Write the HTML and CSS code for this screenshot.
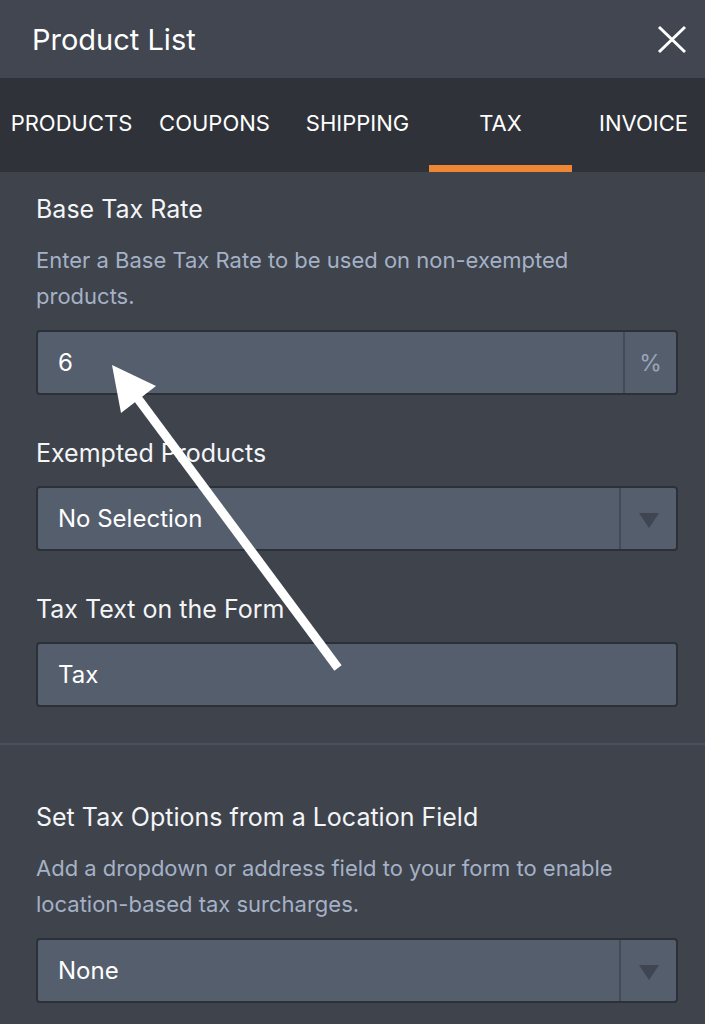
FILE: index.html
```html
<!DOCTYPE html>
<html lang="en">
<head>
<meta charset="UTF-8" />
<meta name="viewport" content="width=device-width, initial-scale=1" />
<title>Product List - Tax</title>
<link rel="stylesheet" href="styles.css">
</head>
<body>

<header class="panel-header">
  <h1 class="panel-title">Product List</h1>
  <button class="close-btn" aria-label="Close">
    <svg viewBox="0 0 30 30" width="30" height="30">
      <path d="M2 2 L28 27 M28 2 L2 27" />
    </svg>
  </button>
</header>

<nav class="tabs">
  <a class="tab">PRODUCTS</a>
  <a class="tab">COUPONS</a>
  <a class="tab">SHIPPING</a>
  <a class="tab active">TAX</a>
  <a class="tab">INVOICE</a>
</nav>

<main>
  <section class="group">
    <div class="field">
      <label class="field-label">Base Tax Rate</label>
      <p class="field-desc">Enter a Base Tax Rate to be used on non-exempted products.</p>
      <div class="control">
        <span class="control-value">6</span>
        <span class="addon addon-text">%</span>
      </div>
    </div>

    <div class="field">
      <label class="field-label">Exempted Products</label>
      <div class="control">
        <span class="control-value">No Selection</span>
        <span class="addon addon-arrow"><i class="caret"></i></span>
      </div>
    </div>

    <div class="field">
      <label class="field-label">Tax Text on the Form</label>
      <div class="control">
        <span class="control-value">Tax</span>
      </div>
    </div>
  </section>

  <section class="group group-location">
    <div class="field">
      <label class="field-label">Set Tax Options from a Location Field</label>
      <p class="field-desc">Add a dropdown or address field to your form to enable location-based tax surcharges.</p>
      <div class="control">
        <span class="control-value">None</span>
        <span class="addon addon-arrow"><i class="caret"></i></span>
      </div>
    </div>
  </section>
</main>

<!-- annotation arrow drawn over the form -->
<svg class="pointer" viewBox="0 0 705 1024" width="705" height="1024" aria-hidden="true">
  <line x1="338" y1="668" x2="136" y2="396" />
  <polygon points="112,365 156,386 121,413" />
</svg>

</body>
</html>
```

FILE: styles.css
```css
body {
  margin: 0;
  width: 705px;
  min-height: 1024px;
  background: #3e434c;
  font-family: Inter, Roboto, 'Liberation Sans', sans-serif;
  color: #f1f3f6;
  position: relative;
  overflow: hidden;
}
.panel-header {
  height: 78px;
  background: #414651;
  display: flex;
  align-items: center;
  justify-content: space-between;
  padding: 0 18px 0 32px;
}
.panel-title {
  margin: 0;
  font-size: 29px;
  font-weight: 400;
  color: #fff;
}
.close-btn {
  background: none;
  border: none;
  padding: 0;
  width: 30px;
  height: 30px;
  margin-top: 2px;
  cursor: pointer;
}
.close-btn svg {
  display: block;
}
.close-btn path {
  stroke: #fff;
  stroke-width: 3;
  fill: none;
}
.tabs {
  height: 94px;
  background: #2f3239;
  display: flex;
  overflow: hidden;
}
.tab {
  flex: 0 0 143px;
  display: flex;
  align-items: center;
  justify-content: center;
  padding-top: 5px;
  padding-bottom: 3px;
  font-size: 22px;
  color: #fff;
  box-sizing: border-box;
  border-bottom: 7px solid transparent;
}
.tab.active {
  border-bottom-color: #ee8634;
}
.group {
  padding: 19px 27px 36px 36px;
}
.group-location {
  border-top: 2px solid #4a505d;
  padding-top: 54px;
}
.field + .field {
  margin-top: 40px;
}
.field-label {
  display: block;
  font-size: 25px;
  line-height: 36px;
  color: #f4f5f7;
  margin-bottom: 15px;
}
.field-desc {
  margin: 0 0 16px;
  padding-right: 20px;
  font-size: 22px;
  line-height: 36px;
  color: #a5b1c6;
}
.control {
  height: 65px;
  box-sizing: border-box;
  border: 2px solid #2c3037;
  border-radius: 4px;
  background: #555e6d;
  display: flex;
  align-items: stretch;
}
.control-value {
  flex: 1;
  display: flex;
  align-items: center;
  padding-left: 20px;
  font-size: 24px;
  color: #fff;
}
.addon {
  border-left: 2px solid #454b56;
  display: flex;
  align-items: center;
  justify-content: center;
}
.addon-text {
  width: 51px;
  font-size: 23px;
  color: #9aa5b8;
}
.addon-arrow {
  width: 55px;
}
.caret {
  width: 0;
  height: 0;
  border-left: 10px solid transparent;
  border-right: 10px solid transparent;
  border-top: 15px solid #3f4551;
  margin-top: 3px;
}
.pointer {
  position: absolute;
  left: 0;
  top: 0;
  pointer-events: none;
}
.pointer line {
  stroke: #fff;
  stroke-width: 9;
}
.pointer polygon {
  fill: #fff;
}
```
